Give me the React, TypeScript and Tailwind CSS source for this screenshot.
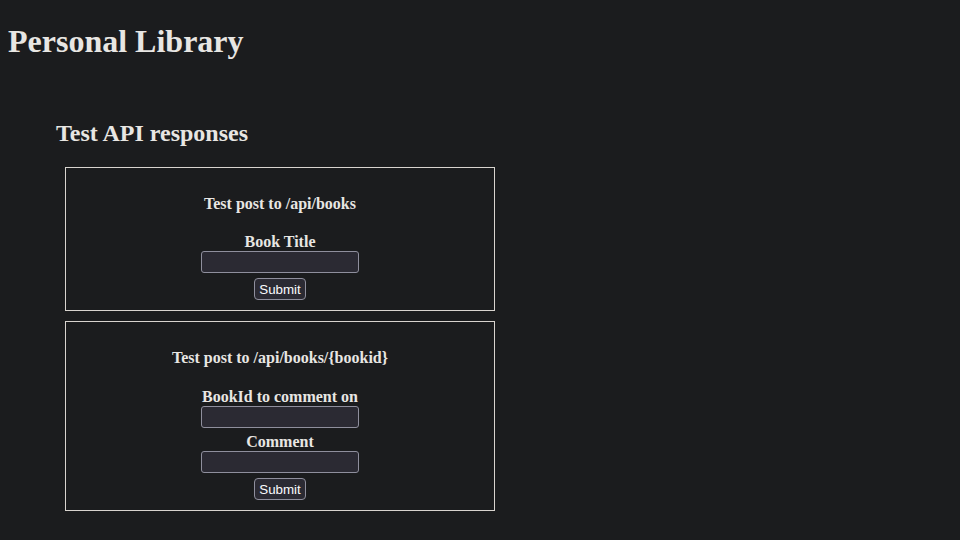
import React from "react";

const serif = "font-['Liberation_Serif','Times_New_Roman',serif]";

function Field({ label, mt, lbl }: { label: string; mt: string; lbl: string }) {
  return (
    <div className={`flex flex-col items-center ${mt}`}>
      <label className={`${serif} font-bold text-[16px] ${lbl} text-[#e8e6e3]`}>{label}</label>
      <input
        type="text"
        className="w-[158px] h-[22px] bg-[#2b2a33] border border-[#8f8f9d] rounded-[3px] outline-none text-[#fbfbfe] px-[2px] text-[13px]"
      />
    </div>
  );
}

function Box({ title, fields }: { title: string; fields: { label: string; mt: string; lbl: string }[] }) {
  return (
    <div className="ml-[9px] w-[430px] border border-[#d8d4cf] pt-[27px] pb-[10px] flex flex-col items-center">
      <h4 className={`${serif} font-bold text-[16px] leading-[18px] text-[#e8e6e3]`}>{title}</h4>
      {fields.map((f) => (
        <Field key={f.label} label={f.label} mt={f.mt} lbl={f.lbl} />
      ))}
      <button className="mt-[5px] h-[22px] w-[52px] pt-[1px] bg-[#2b2a33] border border-[#8f8f9d] rounded-[4px] text-[#fbfbfe] text-[13.33px] leading-[19px] font-['Liberation_Sans',Arial,sans-serif]">
        Submit
      </button>
    </div>
  );
}

export default function App() {
  return (
    <div className="min-h-[540px] bg-[#1b1c1e] px-[8px] pb-[8px] overflow-hidden">
      <h1 className={`${serif} font-bold text-[32px] leading-[37px] text-[#e8e6e3] pt-[23px]`}>Personal Library</h1>
      <div className="pl-[48px] mt-[59px]">
        <h2 className={`${serif} font-bold text-[24px] leading-[28px] text-[#e8e6e3]`}>Test API responses</h2>
        <div className="mt-[20px] flex flex-col gap-[10px]">
          <Box
            title="Test post to /api/books"
            fields={[{ label: "Book Title", mt: "mt-[19px]", lbl: "pt-[1px] leading-[18px]" }]}
          />
          <Box
            title="Test post to /api/books/{bookid}"
            fields={[
              { label: "BookId to comment on", mt: "mt-[20px]", lbl: "leading-[19px]" },
              { label: "Comment", mt: "mt-[4px]", lbl: "leading-[19px]" },
            ]}
          />
        </div>
      </div>
    </div>
  );
}
